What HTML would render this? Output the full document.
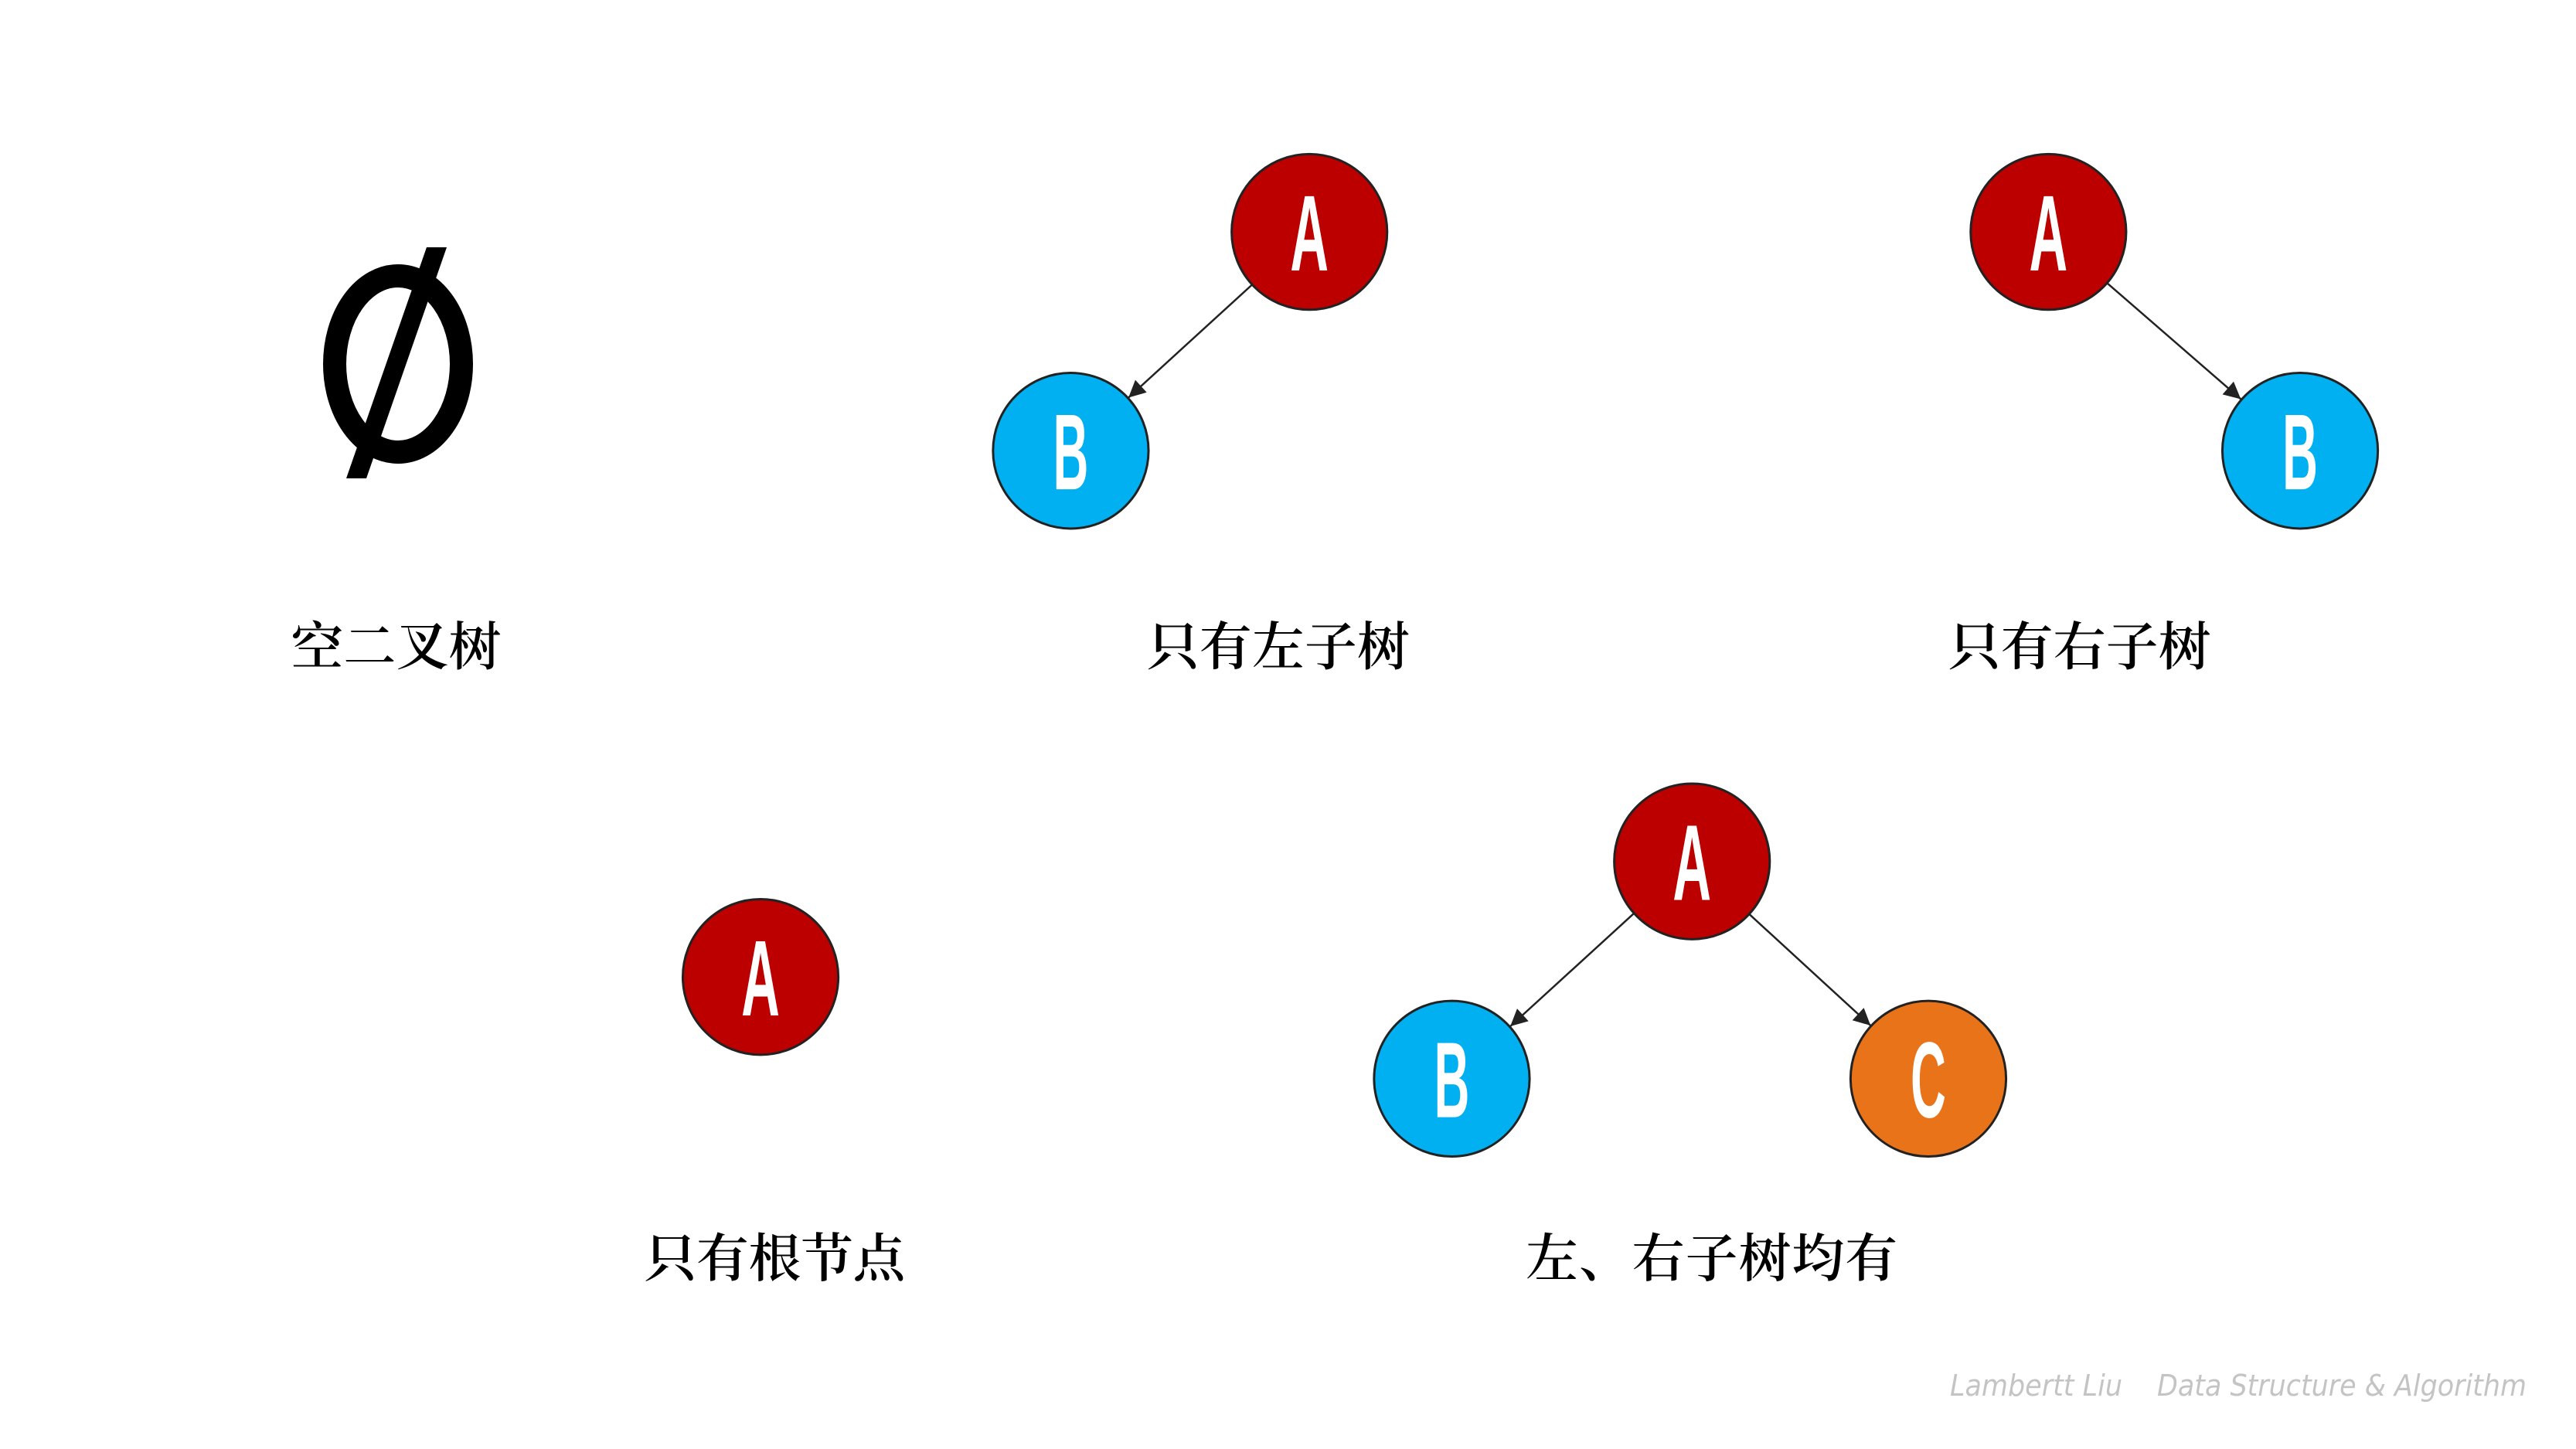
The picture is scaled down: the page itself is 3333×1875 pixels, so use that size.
<!DOCTYPE html>
<html><head><meta charset="utf-8"><style>
html,body{margin:0;padding:0;background:#fff;}
svg{display:block}
.lbl{font-family:"Noto Serif CJK SC","Noto Serif CJK JP","Noto Serif CJK TC","Liberation Serif",serif;font-size:68px;font-weight:600;fill:#000;}
.nd{font-family:"Liberation Sans","DejaVu Sans",sans-serif;font-weight:bold;font-size:140px;fill:#fff;}
</style></head><body>
<svg width="3333" height="1875" viewBox="0 0 3333 1875" xmlns="http://www.w3.org/2000/svg">
<defs>
<marker id="ah" viewBox="0 0 10 10" refX="10" refY="5" markerWidth="24" markerHeight="22" markerUnits="userSpaceOnUse" orient="auto">
<path d="M0,0 L10,5 L0,10 z" fill="#222"/>
</marker>
</defs>
<ellipse cx="515" cy="471" rx="82" ry="114" fill="none" stroke="#000" stroke-width="30"/>
<polygon points="552,320 578,320 474,619 448,619" fill="#000"/>

<g transform="scale(0.996 0.997)">
<text class="lbl" x="378" y="863" textLength="273">空二叉树</text>

<line x1="1626" y1="370" x2="1466" y2="516" stroke="#222" stroke-width="2.5" marker-end="url(#ah)"/>
<circle cx="1701" cy="301" r="101" fill="#BC0000" stroke="#222" stroke-width="3"/>
<text class="nd" x="1701" y="351" text-anchor="middle" textLength="50" lengthAdjust="spacingAndGlyphs">A</text>
<circle cx="1391" cy="585" r="101" fill="#00B0F0" stroke="#222" stroke-width="3"/>
<text class="nd" x="1391" y="635" text-anchor="middle" textLength="46" lengthAdjust="spacingAndGlyphs">B</text>
<text class="lbl" x="1490" y="863" textLength="341">只有左子树</text>

<line x1="2738" y1="368" x2="2911" y2="518" stroke="#222" stroke-width="2.5" marker-end="url(#ah)"/>
<circle cx="2661" cy="301" r="101" fill="#BC0000" stroke="#222" stroke-width="3"/>
<text class="nd" x="2661" y="351" text-anchor="middle" textLength="50" lengthAdjust="spacingAndGlyphs">A</text>
<circle cx="2988" cy="585" r="101" fill="#00B0F0" stroke="#222" stroke-width="3"/>
<text class="nd" x="2988" y="635" text-anchor="middle" textLength="46" lengthAdjust="spacingAndGlyphs">B</text>
<text class="lbl" x="2531" y="863" textLength="341">只有右子树</text>

<circle cx="988" cy="1268" r="101" fill="#BC0000" stroke="#222" stroke-width="3"/>
<text class="nd" x="988" y="1318" text-anchor="middle" textLength="50" lengthAdjust="spacingAndGlyphs">A</text>
<text class="lbl" x="837" y="1657" textLength="339">只有根节点</text>

<line x1="2122" y1="1186" x2="1962" y2="1332" stroke="#222" stroke-width="2.5" marker-end="url(#ah)"/>
<line x1="2273" y1="1187" x2="2430" y2="1331" stroke="#222" stroke-width="2.5" marker-end="url(#ah)"/>
<circle cx="2198" cy="1118" r="101" fill="#BC0000" stroke="#222" stroke-width="3"/>
<text class="nd" x="2198" y="1168" text-anchor="middle" textLength="50" lengthAdjust="spacingAndGlyphs">A</text>
<circle cx="1886" cy="1400" r="101" fill="#00B0F0" stroke="#222" stroke-width="3"/>
<text class="nd" x="1886" y="1450" text-anchor="middle" textLength="46" lengthAdjust="spacingAndGlyphs">B</text>
<circle cx="2505" cy="1400" r="101" fill="#E97319" stroke="#222" stroke-width="3"/>
<text class="nd" x="2505" y="1450" text-anchor="middle" textLength="46" lengthAdjust="spacingAndGlyphs">C</text>
<text class="lbl" x="1982" y="1657" textLength="483">左、右子树均有</text>
</g>

<text x="2523" y="1806" font-family="DejaVu Sans, Liberation Sans, sans-serif" font-style="italic" font-size="38" fill="#c4c4c4" textLength="223" lengthAdjust="spacingAndGlyphs">Lambertt Liu</text>
<text x="2791" y="1806" font-family="DejaVu Sans, Liberation Sans, sans-serif" font-style="italic" font-size="38" fill="#c4c4c4" textLength="478" lengthAdjust="spacingAndGlyphs">Data Structure &amp; Algorithm</text>
</svg>
</body></html>
